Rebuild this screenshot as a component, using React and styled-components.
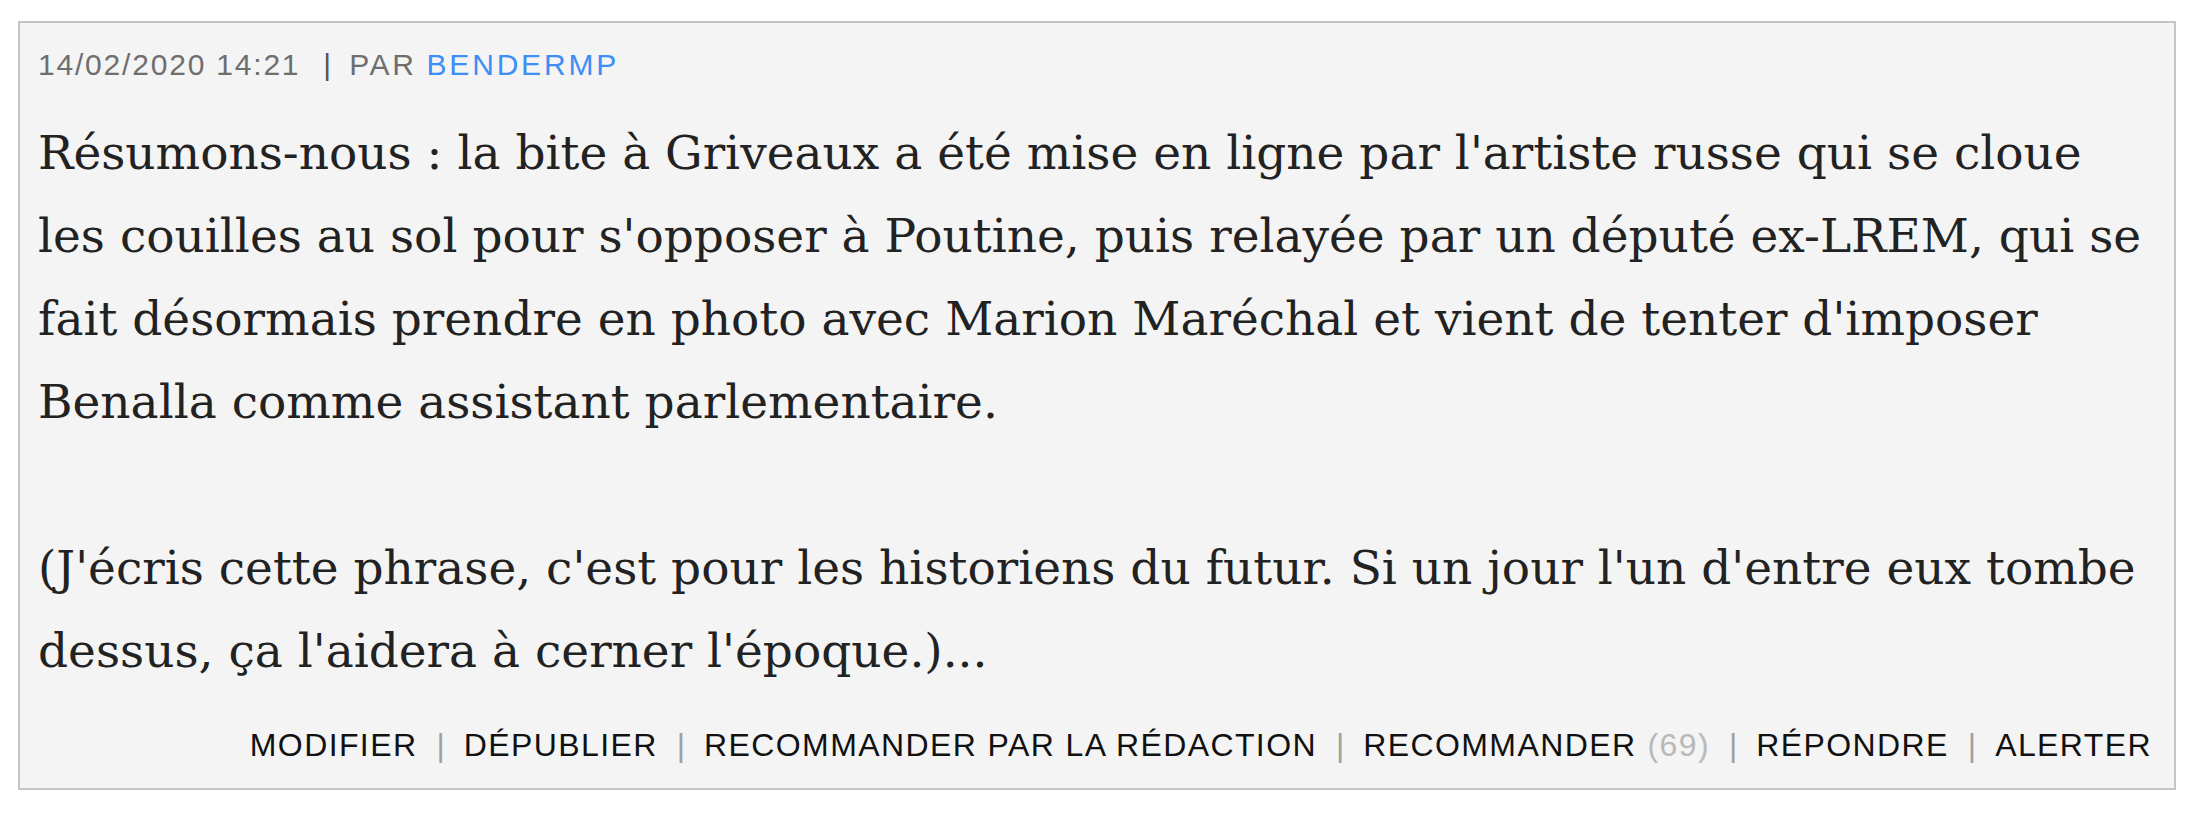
import styled, { createGlobalStyle } from 'styled-components'

const GlobalStyle = createGlobalStyle`
  body {
    margin: 0;
    background: #ffffff;
  }
`

const Page = styled.div`
  padding: 21px 24px 0 18px;
`

const CommentBox = styled.article`
  background: #f4f4f4;
  border: 2px solid #c4c4c4;
  padding: 24px 22px 24px 18px;
`

const Meta = styled.div`
  font-family: "Liberation Sans", Arial, sans-serif;
  font-size: 30px;
  letter-spacing: 1.8px;
  color: #6e6e6e;
  line-height: 36px;
`

const By = styled.span`
  letter-spacing: 2.6px;
`

const Author = styled.span`
  color: #3d8ef5;
  letter-spacing: 2.8px;
`

const Sep = styled.span`
  color: ${p => p.light ? '#a0a0a0' : '#555'};
  margin: ${p => p.light ? '0 19px' : '0 18px 0 23px'};
  letter-spacing: 0;
`

const Body = styled.div`
  font-family: "DejaVu Serif", "Liberation Serif", serif;
  font-size: 47px;
  line-height: 83px;
  color: #222;
  margin-top: 28px;
`

const Paragraph = styled.p`
  margin: 0 0 ${p => p.last ? 0 : 83}px;
`

const Line = styled.span`
  display: block;
  white-space: nowrap;
`

const Actions = styled.div`
  display: flex;
  justify-content: flex-end;
  align-items: center;
  margin-top: 35px;
  font-family: "Liberation Sans", Arial, sans-serif;
  font-size: 32px;
  letter-spacing: 1.4px;
  color: #111;
`

const Action = styled.a`
  color: #111;
  text-decoration: none;
  cursor: pointer;
`

const Count = styled.span`
  color: #b9b9b9;
  margin-left: 11px;
`

const paragraphs = [
  [
    "Résumons-nous : la bite à Griveaux a été mise en ligne par l'artiste russe qui se cloue",
    "les couilles au sol pour s'opposer à Poutine, puis relayée par un député ex-LREM, qui se",
    "fait désormais prendre en photo avec Marion Maréchal et vient de tenter d'imposer",
    "Benalla comme assistant parlementaire.",
  ],
  [
    "(J'écris cette phrase, c'est pour les historiens du futur. Si un jour l'un d'entre eux tombe",
    "dessus, ça l'aidera à cerner l'époque.)...",
  ],
]

const actions = [
  { label: 'MODIFIER' },
  { label: 'DÉPUBLIER' },
  { label: 'RECOMMANDER PAR LA RÉDACTION' },
  { label: 'RECOMMANDER', count: 69 },
  { label: 'RÉPONDRE' },
  { label: 'ALERTER' },
]

export default function App() {
  return (
    <Page>
      <GlobalStyle />
      <CommentBox>
        <Meta>
          14/02/2020 14:21<Sep>|</Sep><By>PAR</By> <Author>BENDERMP</Author>
        </Meta>
        <Body>
          {paragraphs.map((lines, i) => (
            <Paragraph key={i} last={i === paragraphs.length - 1}>
              {lines.map(l => <Line key={l}>{l}</Line>)}
            </Paragraph>
          ))}
        </Body>
        <Actions>
          {actions.map((a, i) => (
            <span key={a.label + i}>
              {i > 0 && <Sep light>|</Sep>}
              <Action>{a.label}</Action>
              {a.count != null && <Count>({a.count})</Count>}
            </span>
          ))}
        </Actions>
      </CommentBox>
    </Page>
  )
}
